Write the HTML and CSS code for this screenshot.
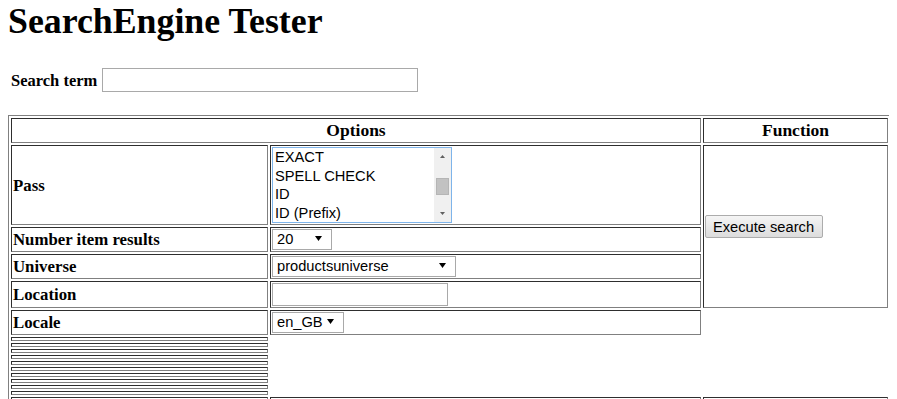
FILE: index.html
```html
<!DOCTYPE html>
<html lang="en">
<head>
<meta charset="utf-8">
<title>SearchEngine Tester</title>
<link rel="stylesheet" href="styles.css">
</head>
<body>
<h1 class="title">SearchEngine Tester</h1>
<div class="search-row">
  <label class="search-label" for="term">Search term</label>
  <input id="term" class="text-input term-input" type="text">
</div>
<table class="grid">
  <colgroup>
    <col class="col-a">
    <col class="col-b">
    <col class="col-c">
  </colgroup>
  <tr class="head-row">
    <th colspan="2">Options</th>
    <th>Function</th>
  </tr>
  <tr>
    <th class="label-cell">Pass</th>
    <td class="field-cell">
      <div class="listbox">
        <div class="list-items">
          <div class="option">EXACT</div>
          <div class="option">SPELL CHECK</div>
          <div class="option">ID</div>
          <div class="option">ID (Prefix)</div>
        </div>
        <div class="scrollbar">
          <div class="sb-btn"><svg width="5" height="3" viewBox="0 0 5 3"><polygon points="0,3 5,3 2.5,0" fill="#606060"/></svg></div>
          <div class="sb-track"><div class="sb-thumb"></div></div>
          <div class="sb-btn"><svg width="5" height="3" viewBox="0 0 5 3"><polygon points="0,0 5,0 2.5,3" fill="#606060"/></svg></div>
        </div>
      </div>
    </td>
    <td class="func-cell" rowspan="4">
      <button class="btn" type="button">Execute search</button>
    </td>
  </tr>
  <tr>
    <th class="label-cell">Number item results</th>
    <td class="field-cell">
      <div class="dropdown dd-num"><span>20</span><svg class="dd-arrow" width="7" height="5" viewBox="0 0 7 5"><polygon points="0,0 7,0 3.5,5" fill="#000"/></svg></div>
    </td>
  </tr>
  <tr>
    <th class="label-cell">Universe</th>
    <td class="field-cell">
      <div class="dropdown dd-universe"><span>productsuniverse</span><svg class="dd-arrow" width="7" height="5" viewBox="0 0 7 5"><polygon points="0,0 7,0 3.5,5" fill="#000"/></svg></div>
    </td>
  </tr>
  <tr>
    <th class="label-cell">Location</th>
    <td class="field-cell">
      <input class="text-input loc-input" type="text">
    </td>
  </tr>
  <tr>
    <th class="label-cell">Locale</th>
    <td class="field-cell">
      <div class="dropdown dd-locale"><span>en_GB</span><svg class="dd-arrow" width="7" height="5" viewBox="0 0 7 5"><polygon points="0,0 7,0 3.5,5" fill="#000"/></svg></div>
    </td>
  </tr>
  <tr><td class="stripe-cell"></td></tr>
  <tr><td class="stripe-cell"></td></tr>
  <tr><td class="stripe-cell"></td></tr>
  <tr><td class="stripe-cell"></td></tr>
  <tr><td class="stripe-cell"></td></tr>
  <tr><td class="stripe-cell"></td></tr>
  <tr><td class="stripe-cell"></td></tr>
  <tr><td class="stripe-cell"></td></tr>
  <tr><td class="stripe-cell"></td></tr>
  <tr><td class="stripe-cell"></td></tr>
  <tr class="tail-row">
    <td class="tail-cell"></td>
    <td class="tail-cell"></td>
    <td class="tail-cell"></td>
  </tr>
</table>
</body>
</html>
```

FILE: styles.css
```css
html {
  overflow: hidden;
  background: #fff;
}

body {
  margin: 0 8px;
  font-family: "Liberation Serif", "Times New Roman", serif;
  font-size: 16.8px;
  color: #000;
  background: #fff;
}

.title {
  margin: 3px 0 0;
  font-size: 35.8px;
  line-height: 36px;
  font-weight: bold;
}

.search-row {
  display: flex;
  align-items: center;
  margin-top: 29px;
  padding-left: 3px;
}

.search-label {
  font-weight: bold;
  font-size: 16.5px;
  line-height: 19px;
}

.text-input {
  box-sizing: border-box;
  display: block;
  margin: 0;
  padding: 0 2px;
  border: 1px solid #a9a9a9;
  background: #fff;
  font: 14.67px "Liberation Sans", Arial, sans-serif;
  outline: none;
}

.term-input {
  width: 316px;
  height: 24px;
  margin-left: 5px;
}

.grid {
  margin-top: 23px;
  border-collapse: separate;
  border-spacing: 2px;
  border: 1px solid;
  border-color: #808080 #2e2e2e #2e2e2e #808080;
  table-layout: fixed;
  width: 883px;
}

.col-a { width: 257px; }
.col-b { width: 431px; }
.col-c { width: 185px; }

.grid th,
.grid td {
  border: 1px solid;
  border-color: #2e2e2e #808080 #808080 #2e2e2e;
  padding: 1px;
}

.head-row th {
  font-size: 17.5px;
  line-height: 21px;
  text-align: center;
  font-weight: bold;
}

.label-cell {
  text-align: left;
  font-weight: bold;
  vertical-align: middle;
  line-height: 19px;
  white-space: nowrap;
}

.field-cell {
  vertical-align: middle;
}

.listbox {
  box-sizing: border-box;
  display: flex;
  width: 180px;
  height: 76px;
  border: 1px solid #7eb4ea;
  background: #fff;
  font: 14.67px "Liberation Sans", Arial, sans-serif;
}

.list-items {
  flex: 1;
  overflow: hidden;
}

.option {
  height: 18.5px;
  line-height: 18.5px;
  padding-left: 2px;
  white-space: nowrap;
}

.scrollbar {
  width: 17px;
  display: flex;
  flex-direction: column;
  background: #f0f0f0;
}

.sb-btn {
  height: 17px;
  display: flex;
  align-items: center;
  justify-content: center;
}

.sb-btn svg {
  display: block;
}

.sb-track {
  flex: 1;
  padding: 13px 2px 0 2px;
}

.sb-thumb {
  box-sizing: border-box;
  height: 17px;
  background: #c2c2c2;
  border: 1px solid #b5b5b5;
}

.dropdown {
  box-sizing: border-box;
  display: flex;
  align-items: center;
  justify-content: space-between;
  height: 21px;
  padding: 0 9px 0 4px;
  border: 1px solid #a9a9a9;
  background: #fff;
  font: 14.67px/19px "Liberation Sans", Arial, sans-serif;
  white-space: nowrap;
}

.dd-arrow {
  display: block;
  margin-top: -2px;
}

.dd-num { width: 60px; }
.dd-universe { width: 184px; }
.dd-locale { width: 72px; }

.loc-input {
  width: 176px;
  height: 23px;
}

.func-cell {
  vertical-align: middle;
  text-align: left;
}

.btn {
  box-sizing: border-box;
  display: block;
  width: 118px;
  height: 23px;
  margin: 0;
  padding: 0 7px;
  border: 1px solid #acacac;
  border-radius: 2px;
  background: linear-gradient(#f5f5f5, #dcdcdc);
  color: #000;
  font: 14.67px "Liberation Sans", Arial, sans-serif;
  text-align: left;
  white-space: nowrap;
}

.stripe-cell {
  height: 0;
}

.tail-cell {
  height: 20px;
}
```
